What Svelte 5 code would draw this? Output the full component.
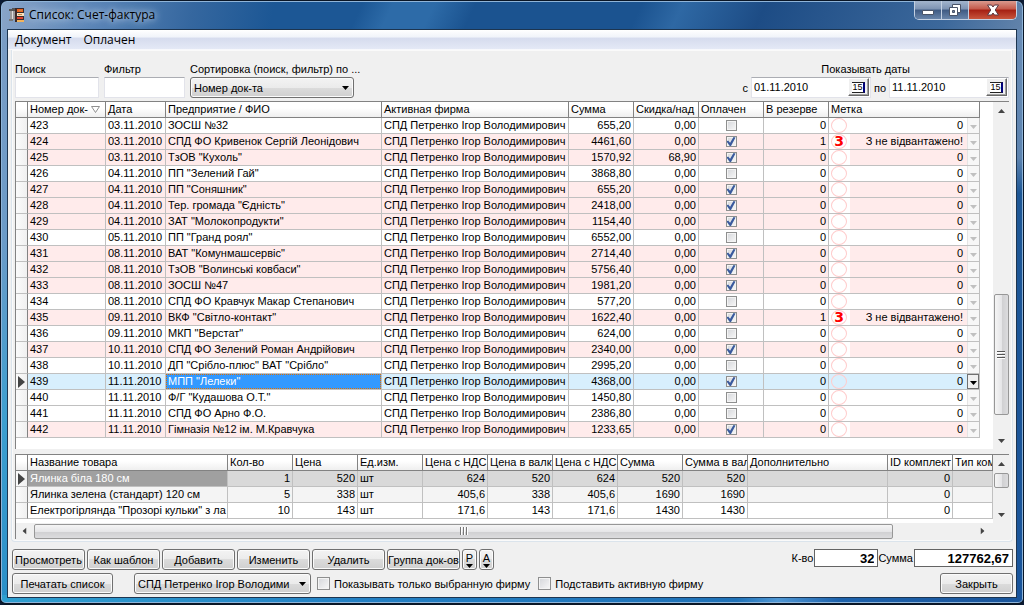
<!--
    InvoiceList.svelte
    ==================
    Invoice list window: toolbar, invoice grid, goods grid, action bar.
-->
<script>
    const FIRM = 'СПД Петренко Ігор Володимирович';

    // number, date, company, sum, discount, paid, reserved, mark
    const source = [
        [423, '03.11.2010', 'ЗОСШ №32', '655,20', '0,00', false],
        [424, '03.11.2010', 'СПД ФО Кривенок Сергій Леонідович', '4461,60', '0,00', true, 1, 'З не відвантажено!'],
        [425, '03.11.2010', 'ТзОВ "Кухоль"', '1570,92', '68,90', true],
        [426, '04.11.2010', 'ПП "Зелений Гай"', '3868,80', '0,00', false],
        [427, '04.11.2010', 'ПП "Соняшник"', '655,20', '0,00', true],
        [428, '04.11.2010', 'Тер. громада "Єдність"', '2418,00', '0,00', true],
        [429, '04.11.2010', 'ЗАТ "Молокопродукти"', '1154,40', '0,00', true],
        [430, '05.11.2010', 'ПП "Гранд роял"', '6552,00', '0,00', false],
        [431, '08.11.2010', 'ВАТ "Комунмашсервіс"', '2714,40', '0,00', true],
        [432, '08.11.2010', 'ТзОВ "Волинські ковбаси"', '5756,40', '0,00', true],
        [433, '08.11.2010', 'ЗОСШ №47', '1981,20', '0,00', true],
        [434, '08.11.2010', 'СПД ФО Кравчук Макар Степанович', '577,20', '0,00', false],
        [435, '09.11.2010', 'ВКФ "Світло-контакт"', '1622,40', '0,00', true, 1, 'З не відвантажено!'],
        [436, '09.11.2010', 'МКП "Верстат"', '624,00', '0,00', false],
        [437, '10.11.2010', 'СПД ФО Зелений Роман Андрійович', '2340,00', '0,00', true],
        [438, '10.11.2010', 'ДП "Срібло-плюс" ВАТ "Срібло"', '2995,20', '0,00', false],
        [439, '11.11.2010', 'МПП "Лелеки"', '4368,00', '0,00', true],
        [440, '11.11.2010', 'Ф/Г "Кудашова О.Т."', '1450,80', '0,00', false],
        [441, '11.11.2010', 'СПД ФО Арно Ф.О.', '2386,80', '0,00', false],
        [442, '11.11.2010', 'Гімназія №12 ім. М.Кравчука', '1233,65', '0,00', true]
    ];

    let invoices = $state(
        source.map(([id, date, company, sum, discount, paid, reserved = 0, mark = '0']) => ({
            id, date, company, sum, discount, paid, reserved, mark
        }))
    );
    let selected = $state(439);

    const goodsColumns = [
        'Кол-во', 'Цена', 'Ед.изм.', 'Цена с НДС', 'Цена в валк', 'Цена с НДС',
        'Сумма', 'Сумма в вал', 'Дополнительно', 'ID комплект', 'Тип ком'
    ];
    const goods = [
        ['Ялинка біла 180 см', '1', '520', 'шт', '624', '520', '624', '520', '520', '', '0', ''],
        ['Ялинка зелена (стандарт) 120 см', '5', '338', 'шт', '405,6', '338', '405,6', '1690', '1690', '', '0', ''],
        ['Електрогірлянда "Прозорі кульки" з ла', '10', '143', 'шт', '171,6', '143', '171,6', '1430', '1430', '', '0', '']
    ];

    const actions = ['Просмотреть', 'Как шаблон', 'Добавить', 'Изменить', 'Удалить', 'Группа док-ов'];

    let search = $state('');
    let filter = $state('');
    let dateFrom = $state('01.11.2010');
    let dateTo = $state('11.11.2010');
    let onlyFirm = $state(false);
    let putFirm = $state(false);
</script>

{#snippet arrow(dir)}
    <svg class="arrow {dir}" viewBox="0 0 7 4" aria-hidden="true"><path d="M0 0h7L3.5 4z" /></svg>
{/snippet}

{#snippet marker()}
    <svg class="marker" viewBox="0 0 7 12" aria-hidden="true"><path d="M0 0l7 6-7 6z" /></svg>
{/snippet}

<div class="window">
    <header class="titlebar">
        <svg class="app-icon" viewBox="0 0 16 16" aria-hidden="true">
            <path d="M0 2h3v2H0zM3 1h4v3H3z" fill="#555" />
            <path d="M1 4h5v9H1z" fill="#9a9a9a" />
            <path d="M3 4h1v10H3z" fill="#ddd" />
            <path d="M0 12h4v2H0z" fill="#777" />
            <path d="M6 1h9v14H6z" fill="#3a2a2a" />
            <path d="M8 2h6v3H8z" fill="#e8641e" />
            <path d="M8 6h7v3H8z" fill="#f6e3c0" />
            <path d="M8 10h6v2H8z" fill="#e0402a" />
            <path d="M8 13h7v2H8z" fill="#f3b35c" />
            <path d="M10 3h3v1h-3zM9 7h4v1H9z" fill="#c98a4a" />
        </svg>
        <h1>Список: Счет-фактура</h1>
        <div class="window-buttons">
            <button class="min" aria-label="Свернуть">
                <svg viewBox="0 0 12 12"><path d="M.5 6.500h11v4H.5z" fill="#fff" stroke="#4a5468" /></svg>
            </button>
            <button class="max" aria-label="Развернуть">
                <svg viewBox="0 0 12 12">
                    <path d="M3.5.5h8v8h-8z" fill="#fff" stroke="#4a5468" />
                    <path d="M.5 3.5h8v8h-8z" fill="#fff" stroke="#4a5468" />
                    <path d="M3.5 6.5h2v2h-2z" fill="#6f84a5" stroke="#4a5468" />
                </svg>
            </button>
            <button class="close" aria-label="Закрыть окно">
                <svg viewBox="0 0 12 12">
                    <path d="M.5 1h4L6 3l1.500-2h4L8.200 6l3.300 5h-4L6 9l-1.500 2h-4L3.800 6z" fill="#fff" stroke="#5a3a44" />
                </svg>
            </button>
        </div>
    </header>

    <main class="client">
        <nav class="menu">
            <a href="#document">Документ</a>
            <a href="#paid">Оплачен</a>
        </nav>

        <section class="box">
            <div class="toolbar">
                <label class="field search">Поиск<input type="text" bind:value={search} /></label>
                <label class="field filter">Фильтр<input type="text" bind:value={filter} /></label>
                <div class="field sort">
                    <label for="sort">Сортировка (поиск, фильтр) по ...</label>
                    <div class="combo">
                        <select id="sort"><option>Номер док-та</option></select>
                        {@render arrow('down')}
                    </div>
                </div>
                <div class="dates">
                    <span class="caption">Показывать даты</span>
                    <div class="range">
                        <label for="from">с</label>
                        <div class="date">
                            <input id="from" type="text" bind:value={dateFrom} />
                            <button aria-label="Календарь"><span>15</span></button>
                        </div>
                        <label for="to">по</label>
                        <div class="date">
                            <input id="to" type="text" bind:value={dateTo} />
                            <button aria-label="Календарь"><span>15</span></button>
                        </div>
                    </div>
                </div>
            </div>

            <div class="grid invoices">
                <div class="view">
                    <table>
                        <colgroup>
                            <col class="w-head" /><col class="w-num" /><col class="w-date" /><col />
                            <col class="w-firm" /><col class="w-std" /><col class="w-std" />
                            <col class="w-std" /><col class="w-std" /><col class="w-mark" />
                        </colgroup>
                        <thead>
                            <tr>
                                <th></th>
                                <th>
                                    <div class="sorted">
                                        Номер док-
                                        <svg viewBox="0 0 9 7" aria-hidden="true"><path d="M.5.5h8l-4 6z" /></svg>
                                    </div>
                                </th>
                                <th>Дата</th>
                                <th>Предприятие / ФИО</th>
                                <th>Активная фирма</th>
                                <th>Сумма</th>
                                <th>Скидка/над</th>
                                <th>Оплачен</th>
                                <th>В резерве</th>
                                <th>Метка</th>
                            </tr>
                        </thead>
                        <tbody>
                            {#each invoices as row (row.id)}
                                <tr
                                    class:paid={row.paid}
                                    class:current={row.id === selected}
                                    onclick={() => (selected = row.id)}
                                >
                                    <th>{#if row.id === selected}{@render marker()}{/if}</th>
                                    <td>{row.id}</td>
                                    <td>{row.date}</td>
                                    <td class="company"><div>{row.company}</div></td>
                                    <td>{FIRM}</td>
                                    <td class="num">{row.sum}</td>
                                    <td class="num">{row.discount}</td>
                                    <td class="tick">
                                        <input type="checkbox" bind:checked={row.paid} aria-label="Оплачен {row.id}" />
                                    </td>
                                    <td class="num">{row.reserved}</td>
                                    <td class="mark">
                                        <div>
                                            <span class="stamp"><b>{row.reserved ? '3' : ''}</b></span>
                                            <span class="mark-text">{row.mark}</span>
                                            <button aria-label="Метка {row.id}">{@render arrow('down')}</button>
                                        </div>
                                    </td>
                                </tr>
                            {/each}
                        </tbody>
                    </table>
                </div>
                <div class="vbar">
                    {@render arrow('up')}
                    <div class="track"><div class="thumb long"><i></i></div></div>
                    {@render arrow('down')}
                </div>
            </div>

            <div class="grid goods">
                <div class="view">
                    <table>
                        <colgroup>
                            <col class="w-head" /><col class="w-name" />
                            {#each goodsColumns.slice(0, 8) as _}<col class="w-std" />{/each}
                            <col /><col class="w-std" /><col class="w-type" />
                        </colgroup>
                        <thead>
                            <tr>
                                <th></th>
                                <th>Название товара</th>
                                {#each goodsColumns as column}<th>{column}</th>{/each}
                            </tr>
                        </thead>
                        <tbody>
                            {#each goods as cells, r}
                                <tr>
                                    <th>{#if r === 0}{@render marker()}{/if}</th>
                                    {#each cells as cell, c}
                                        <td class:num={c > 0 && c !== 3}>{cell}</td>
                                    {/each}
                                </tr>
                            {/each}
                        </tbody>
                    </table>
                </div>
                <div class="vbar">
                    {@render arrow('up')}
                    <div class="track"><div class="thumb"></div></div>
                    {@render arrow('down')}
                </div>
                <div class="hbar">
                    {@render arrow('left')}
                    <div class="thumb"><i></i></div>
                    {@render arrow('right')}
                </div>
            </div>
        </section>

        <footer>
            <div class="bar">
                {#each actions as action}
                    <button class="btn action"><span>{action}</span></button>
                {/each}
                <button class="btn letter">P{@render arrow('down')}</button>
                <button class="btn letter">A{@render arrow('down')}</button>
                <div class="totals">
                    <label for="count">К-во</label>
                    <input id="count" class="count" type="text" value="32" readonly />
                    <label for="total">Сумма</label>
                    <input id="total" class="total" type="text" value="127762,67" readonly />
                </div>
            </div>
            <div class="bar">
                <button class="btn print">Печатать список</button>
                <div class="combo firm">
                    <select aria-label="Фирма"><option>СПД Петренко Ігор Володими</option></select>
                    {@render arrow('down')}
                </div>
                <label class="check"><input type="checkbox" bind:checked={onlyFirm} />Показывать только выбранную фирму</label>
                <label class="check"><input type="checkbox" bind:checked={putFirm} />Подставить активную фирму</label>
                <button class="btn exit">Закрыть</button>
            </div>
        </footer>
    </main>
</div>

<style>
    :global(body) {
        background: #0b1a33;
    }

    .window, .window * {
        box-sizing: border-box;
    }

    .window {
        display: flex;
        flex-direction: column;
        min-height: 100vh;
        padding: 0 6px 5px;
        border: 1px solid #0a1626;
        border-bottom-width: 2px;
        border-radius: 7px 7px 6px 6px;
        background:
            linear-gradient(100deg, #8aa5c8 0, #5c86b8 90px, #35679f 190px, transparent 270px) top / 100% 29px no-repeat,
            linear-gradient(115deg, #1c5795 0 35%, #2d6ba8 38% 42%, #1b5390 46% 62%, #2e68a4 66%, #1d4c85 74%, #3c689b 92%, #6384ab) top / 100% 29px no-repeat,
            linear-gradient(90deg, #2f9fd0, #2380c4 35%, #1f72b8 72%, #4f97d4 76%, #1d62ac 82%, #1a559b) bottom / 100% 8px no-repeat,
            linear-gradient(#6d8fb8, #5d84b0 26%, #1d5796 32%, #1a559b) right / 12px 100% no-repeat,
            linear-gradient(#7c9cc4, #6b9bc8 40%, #3d9fd0 70%, #2a8fc8);
        box-shadow: inset 0 0 0 1px #8fb4d8;
        font: 11px/14px "Liberation Sans", Arial, sans-serif;
        color: #000;
    }

    button, input, select {
        margin: 0;
        padding: 0;
        font: inherit;
        color: inherit;
        border-radius: 0;
    }

    /* title bar */
    .titlebar {
        display: flex;
        align-items: center;
        gap: 4px;
        height: 28px;
        padding-left: 2px;
    }

    .app-icon {
        width: 16px;
        height: 16px;
    }

    h1 {
        margin: 0;
        font: 12px/18px "Open Sans", "Noto Sans", sans-serif;
        text-shadow: 0 0 6px #c5d6ea, 0 0 10px #c5d6ea;
    }

    .window-buttons {
        display: flex;
        align-self: flex-start;
        height: 19px;
        margin-left: auto;
        border: 1px solid #c3d0e2;
        border-top: 0;
        border-radius: 0 0 5px 5px;
        overflow: hidden;
    }

    .window-buttons button {
        display: grid;
        place-items: center;
        width: 27px;
        border: 0;
        border-right: 1px solid #c3d0e2;
        background: linear-gradient(#a3b5cd, #7d93b3 45%, #3e5a83 50%, #6884a9);
    }

    .window-buttons .close {
        width: 47px;
        border-right: 0;
        background: linear-gradient(#d99a8e, #c4594a 45%, #a51f12 50%, #c8553c);
    }

    .window-buttons svg {
        width: 12px;
        height: 12px;
    }

    /* client area */
    .client {
        display: flex;
        flex: 1;
        flex-direction: column;
        border: 1px solid #1d3550;
        background: #f0f0f0;
    }

    .menu {
        display: flex;
        gap: 12px;
        padding: 0 7px;
        border-bottom: 1px solid #f7f8fc;
        background: linear-gradient(#fff 0, #f1f4fa 35%, #d6dcee 45%, #e4e9f6);
    }

    .menu a {
        font: 12px/19px "Open Sans", "Noto Sans", sans-serif;
        color: #000;
        text-decoration: none;
    }

    .box {
        display: flex;
        flex: 1;
        flex-direction: column;
        margin: 0 3px;
        padding: 12px 3px 2px;
        border: 1px solid #dbe4ec;
        border-top: 0;
        border-radius: 0 0 4px 4px;
        box-shadow: inset 0 0 0 1px #fafafa;
    }

    /* toolbar */
    .toolbar {
        display: flex;
        margin-bottom: 3px;
    }

    .field {
        display: flex;
        flex-direction: column;
        gap: 1px;
        margin-right: 5px;
        white-space: nowrap;
    }

    .search { width: 84px; }
    .filter { width: 81px; }
    .sort   { width: 164px; }

    .field input, .date {
        height: 21px;
        border: 1px solid #e2e3ea;
        border-top-color: #abadb3;
        background: #fff;
    }

    .combo {
        display: grid;
    }

    .combo > :global(*) {
        grid-area: 1 / 1;
    }

    .combo select, .btn {
        height: 21px;
        border: 1px solid #707070;
        border-radius: 3px;
        background: linear-gradient(#f3f3f3, #ebebeb 50%, #dcdcdc 50%, #cfcfcf);
        box-shadow: inset 0 0 0 1px #fbfbfb;
    }

    .combo select {
        width: 100%;
        padding: 0 14px 0 3px;
        appearance: none;
    }

    .combo .arrow {
        align-self: center;
        justify-self: end;
        margin-right: 5px;
        pointer-events: none;
    }

    .arrow {
        display: block;
        width: 7px;
        height: 4px;
        fill: #000;
    }

    .up    { transform: rotate(180deg); }
    .left  { transform: rotate(90deg); }
    .right { transform: rotate(-90deg); }

    .dates {
        display: flex;
        flex-direction: column;
        align-items: flex-end;
        gap: 1px;
        margin-left: auto;
    }

    .caption {
        padding-right: 99px;
    }

    .range {
        display: flex;
        align-items: center;
        gap: 3px;
    }

    .date {
        display: flex;
        width: 120px;
        padding: 0 1px 1px 2px;
    }

    .date input {
        flex: 1;
        min-width: 0;
        border: 0;
        background: none;
    }

    .date button {
        width: 21px;
        border: 1px solid #fff;
        border-right-color: #696969;
        border-bottom-color: #696969;
        background: #f0f0f0;
        box-shadow: inset -1px -1px #a0a0a0;
    }

    .date span {
        display: block;
        width: 13px;
        height: 11px;
        margin: 0 auto;
        border: solid #222;
        border-width: 1px 2px 1px 0;
        border-right-color: #00007a;
        background: #fff;
        font-size: 9px;
        line-height: 9px;
    }

    /* grids */
    .grid {
        display: grid;
        grid-template-columns: 1fr 16px;
        border-top: 1px solid #828282;
        border-left: 1px solid #828282;
        background: #fff;
    }

    .invoices {
        flex: 1;
    }

    .goods {
        grid-template-rows: 68px 16px;
        margin-top: 5px;
    }

    .view {
        min-width: 0;
        overflow: hidden;
    }

    .invoices .view {
        padding-right: 13px;
    }

    table {
        width: 100%;
        table-layout: fixed;
        border-collapse: separate;
        border-spacing: 0;
    }

    .w-head { width: 12px; }
    .w-num  { width: 78px; }
    .w-date { width: 60px; }
    .w-firm { width: 187px; }
    .w-std  { width: 65px; }
    .w-mark { width: 151px; }
    .w-name { width: 200px; }
    .w-type { width: 40px; }

    th, td {
        height: 16px;
        padding: 0 2px;
        border-right: 1px solid #c0c0c0;
        border-bottom: 1px solid #c0c0c0;
        line-height: 15px;
        font-weight: normal;
        text-align: left;
        white-space: nowrap;
        overflow: hidden;
    }

    thead th {
        border-color: #828282;
        background: linear-gradient(#fff 40%, #efefef);
    }

    .goods thead th {
        padding-right: 0;
    }

    tbody th {
        border-right-color: #828282;
        background: linear-gradient(90deg, #fbfbfb, #f0f0f0);
    }

    .sorted {
        display: flex;
        align-items: center;
        justify-content: space-between;
        padding-right: 3px;
    }

    .sorted svg {
        width: 9px;
        height: 7px;
        fill: none;
        stroke: #909090;
    }

    .marker {
        display: block;
        width: 7px;
        height: 12px;
        fill: #444;
    }

    .num {
        text-align: right;
    }

    .paid td {
        background: #ffebeb;
    }

    .current td {
        background: #d8effd;
    }

    td.company {
        padding: 0;
    }

    .company div {
        height: 15px;
        padding: 0 1px;
        border: 1px solid transparent;
        line-height: 13px;
    }

    .current .company div {
        border: 1px dotted #e07000;
        background: #39f;
        color: #fff;
    }

    .goods tbody tr:nth-child(1) td { background: #d9d9d9; }
    .goods tbody tr:nth-child(2) td { background: #f4f4f4; }

    .goods tbody tr:nth-child(1) td:nth-child(2) {
        background: #a0a0a0;
        color: #fff;
    }

    input[type='checkbox'] {
        display: block;
        width: 11px;
        height: 11px;
        appearance: none;
        border: 1px solid #8e8f8f;
        background: linear-gradient(135deg, #d4d6da, #f8f8f8);
        box-shadow: inset 0 0 0 1px #f4f4f4;
    }

    input[type='checkbox']:checked::before {
        content: '';
        display: block;
        width: 9px;
        height: 9px;
        background: #3a5a9e;
        clip-path: polygon(0 50%, 18% 40%, 40% 65%, 78% 0, 100% 5%, 50% 100%, 36% 100%);
    }

    .tick input {
        margin: 0 auto;
    }

    td.mark {
        padding: 0;
    }

    .mark div {
        display: flex;
        height: 15px;
    }

    .stamp {
        width: 21px;
        padding-left: 2px;
        background: #fff;
    }

    .stamp b {
        display: block;
        width: 16px;
        height: 15px;
        border: 1px solid #fcc;
        border-radius: 50%;
        font: bold 14px/13px "DejaVu Sans", sans-serif;
        text-align: center;
        color: #f00;
    }

    .current .stamp {
        background: #d8effd;
    }

    .mark-text {
        flex: 1;
        padding-right: 4px;
        text-align: right;
    }

    .mark button {
        display: grid;
        place-items: center;
        width: 12px;
        padding-top: 3px;
        border: 0;
        border-left: 1px solid #e4e4e4;
        background: #f7f7f7;
    }

    .mark .arrow {
        fill: #c0c0c0;
    }

    .current .mark button {
        border: 1px solid #707070;
        background: #f0f0f0;
    }

    .current .mark .arrow {
        fill: #000;
    }

    /* scroll bars */
    .vbar {
        display: flex;
        flex-direction: column;
        align-items: center;
        padding: 7px 0 6px;
        background: #f0f0f0;
    }

    .vbar > .arrow, .hbar > .arrow {
        fill: #444;
    }

    .track {
        display: flex;
        flex: 1;
        flex-direction: column;
        justify-content: flex-end;
        padding: 7px 0 24px;
    }

    .goods .track {
        justify-content: flex-start;
        padding: 7px 0;
    }

    .vbar .thumb {
        display: grid;
        place-items: center;
        width: 15px;
        height: 15px;
        border: 1px solid #979797;
        border-radius: 2px;
        background: linear-gradient(90deg, #f5f5f5, #e6e6e8 50%, #cfcfd1 50%, #dcdcde);
    }

    .vbar .long {
        height: 121px;
    }

    .vbar i {
        width: 8px;
        height: 8px;
        background: repeating-linear-gradient(#555 0 1px, #fff 1px 2px, transparent 2px 3px);
    }

    .hbar {
        display: flex;
        grid-column: 1 / -1;
        align-items: center;
        padding: 0 23px 0 5px;
        background: #f0f0f0;
    }

    .hbar .thumb {
        display: grid;
        flex: 1;
        place-items: center;
        height: 15px;
        margin: 0 86px 0 6px;
        border: 1px solid #979797;
        border-radius: 2px;
        background: linear-gradient(#f5f5f5, #e6e6e8 50%, #cfcfd1 50%, #dcdcde);
    }

    .hbar i {
        width: 8px;
        height: 8px;
        background: repeating-linear-gradient(90deg, #777 0 1px, #fff 1px 2px, transparent 2px 3px);
    }

    /* action bar */
    footer {
        display: flex;
        flex-direction: column;
        gap: 3px;
        padding: 7px 3px 3px 4px;
    }

    .bar {
        display: flex;
        align-items: center;
        gap: 2px;
        height: 21px;
    }

    .btn {
        overflow: hidden;
        white-space: nowrap;
    }

    .action {
        display: flex;
        justify-content: center;
        align-items: center;
        width: 73px;
    }

    .letter {
        display: flex;
        flex-direction: column;
        align-items: center;
        justify-content: center;
        width: 15px;
        line-height: 12px;
    }

    .totals {
        display: flex;
        align-self: flex-start;
        align-items: center;
        margin-left: auto;
    }

    .totals label {
        padding-right: 1px;
    }

    .totals input {
        height: 18px;
        padding: 0 3px;
        border: 1px solid #646464;
        background: #fff;
        font-size: 13px;
        font-weight: bold;
        text-align: right;
    }

    .count { width: 64px; }
    .total { width: 99px; }
    .print { width: 101px; }

    .firm {
        width: 177px;
        margin: 0 4px 0 19px;
    }

    .check {
        display: flex;
        align-items: center;
        gap: 4px;
        margin-right: 6px;
    }

    .check input {
        width: 13px;
        height: 13px;
    }

    .exit {
        width: 73px;
        margin-left: auto;
    }
</style>
